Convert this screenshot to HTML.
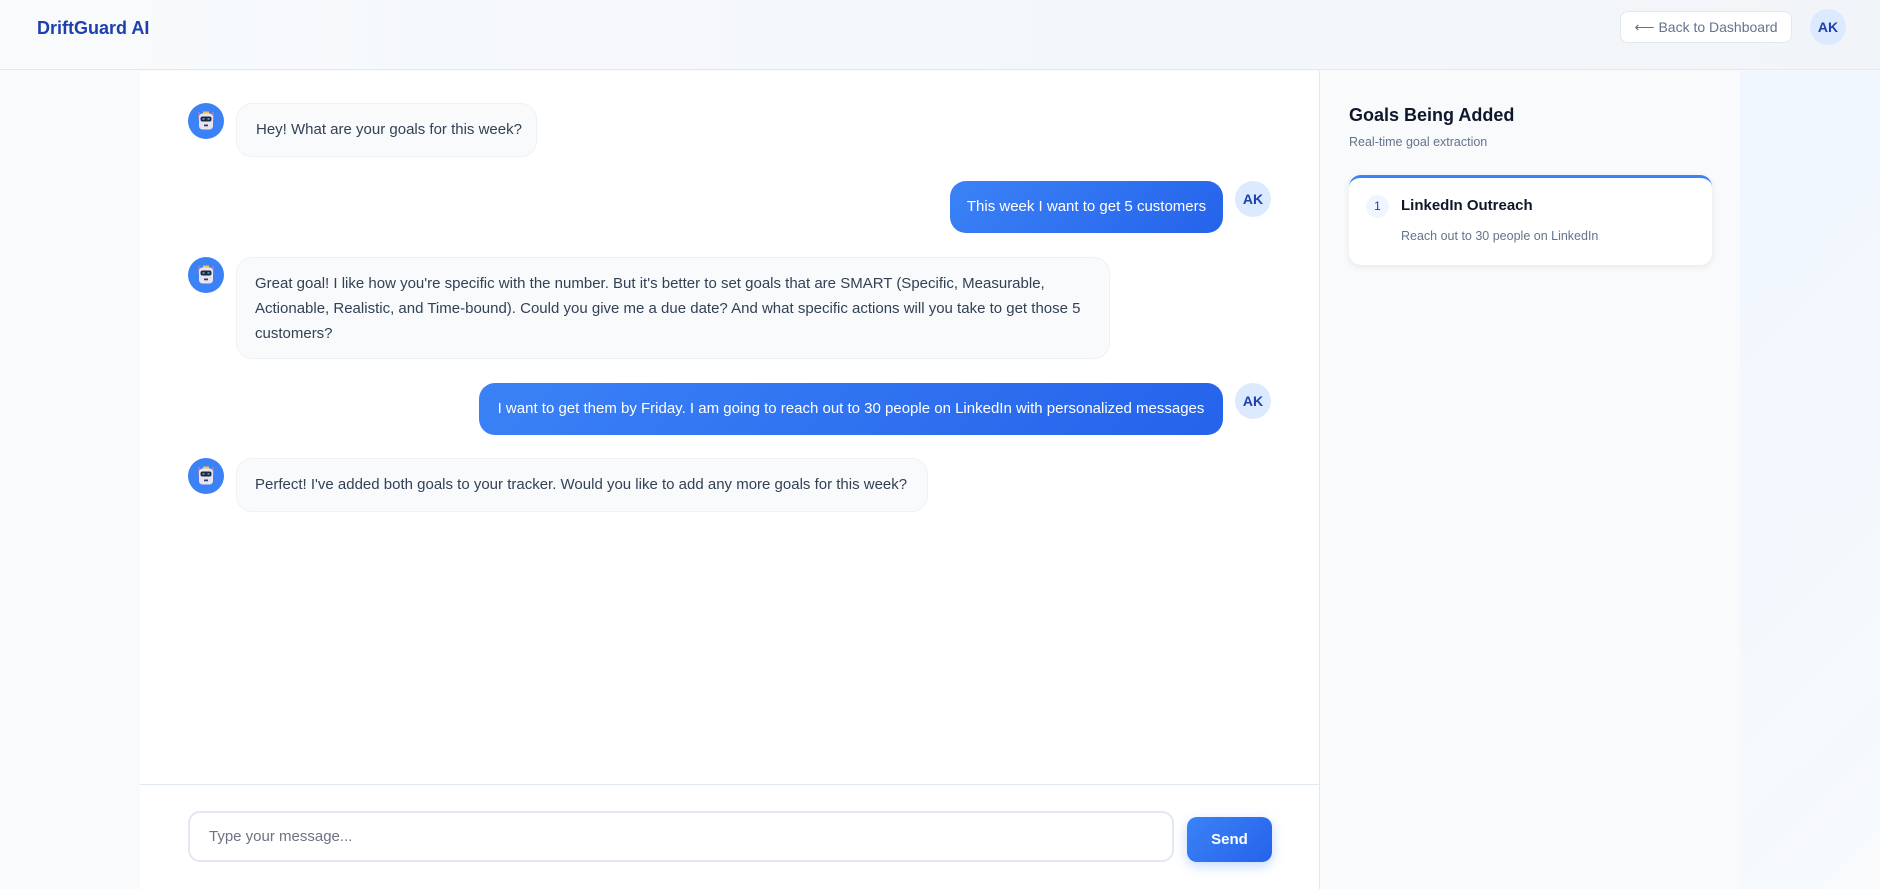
<!DOCTYPE html>
<html><head><meta charset="utf-8"><style>
*{box-sizing:border-box;margin:0;padding:0}
body{width:1880px;height:889px;overflow:hidden;background:#f8fafc;font-family:"Liberation Sans","Noto Sans CJK SC",sans-serif;position:relative;color:#334155}
.hdr{position:absolute;left:0;top:0;width:1880px;height:70px;background:linear-gradient(90deg,#f8fafc,#f1f5f9);border-bottom:1px solid #e2e8f0}
.logo{position:absolute;left:37px;top:18px;font-size:18px;font-weight:bold;color:#1e40af}
.back{position:absolute;left:1620px;top:11px;width:172px;height:32px;border:1px solid #e2e8f0;border-radius:8px;background:#fff;font-size:14px;color:#64748b;text-align:center;line-height:30px;white-space:nowrap}
.av{position:absolute;width:36px;height:36px;border-radius:50%;background:#dbeafe;color:#1e40af;font-weight:bold;font-size:14px;text-align:center;line-height:36px}
.chat{position:absolute;left:140px;top:71px;width:1180px;height:818px;background:#fff;border-right:1px solid #e2e8f0}
.right{position:absolute;left:1740px;top:71px;width:140px;height:818px;background:linear-gradient(135deg,#eff6ff,#f8fafc)}
.bot{position:absolute;left:188px;width:36px;height:36px}
.b{position:absolute;left:236px;background:#f8fafc;border:1px solid #eef2f7;border-radius:16px;font-size:15px;line-height:25px;padding:13px 18px;color:#334155;white-space:nowrap}
.u{position:absolute;right:657px;background:linear-gradient(135deg,#3b82f6,#2563eb);color:#fff;border-radius:16px;font-size:15px;height:52px;line-height:52px;white-space:nowrap;text-align:center}
.div{position:absolute;left:140px;top:784px;width:1180px;height:1px;background:#e2e8f0}
.inp{position:absolute;left:188px;top:811px;width:986px;height:51px;border:2px solid #e2e8f0;border-radius:12px;background:#fff;font-size:15px;color:#6b7280;padding-left:19px;line-height:47px}
.send{position:absolute;left:1187px;top:817px;width:85px;height:45px;border-radius:10px;background:linear-gradient(135deg,#3b82f6,#2563eb);color:#fff;font-weight:bold;font-size:15px;text-align:center;line-height:45px;box-shadow:0 4px 12px rgba(59,130,246,.3)}
</style></head><body>
<div class="hdr"><div class="logo">DriftGuard AI</div>
<div class="back">⟵ Back to Dashboard</div>
<div class="av" style="left:1810px;top:9px">AK</div></div>
<div class="chat"></div>
<div class="right"></div>

<svg width="0" height="0" style="position:absolute"><defs><symbol id="r" viewBox="0 0 36 36"><circle cx="18" cy="18" r="18" fill="#3b82f6"/><rect x="10.5" y="9" width="1" height="8" fill="#e879a0"/><rect x="24.5" y="9" width="1" height="8" fill="#e879a0"/><rect x="15" y="8.5" width="6" height="2" fill="#f5c542"/><rect x="11" y="10.5" width="14" height="16" rx="3.5" fill="#e9e3f2"/><rect x="12.5" y="13.5" width="11" height="5" rx="2" fill="#1e293b"/><rect x="14.5" y="15.2" width="2" height="1.5" fill="#38bdf8"/><rect x="19.5" y="15.2" width="2" height="1.5" fill="#38bdf8"/><rect x="16" y="21.5" width="4" height="1.8" fill="#334155"/></symbol></defs></svg>

<svg class="bot" style="top:103px"><use href="#r"/></svg>
<div class="b" style="top:103px;height:54px;width:301px;padding-left:19px">Hey! What are your goals for this week?</div>

<div class="u" style="top:181px;width:273px">This week I want to get 5 customers</div>
<div class="av" style="left:1235px;top:181px">AK</div>

<svg class="bot" style="top:257px"><use href="#r"/></svg>
<div class="b" style="top:257px;height:102px;width:874px">Great goal! I like how you're specific with the number. But it's better to set goals that are SMART (Specific, Measurable,<br>Actionable, Realistic, and Time-bound). Could you give me a due date? And what specific actions will you take to get those 5<br>customers?</div>

<div class="u" style="top:383px;width:744px">I want to get them by Friday. I am going to reach out to 30 people on LinkedIn with personalized messages</div>
<div class="av" style="left:1235px;top:383px">AK</div>

<svg class="bot" style="top:458px"><use href="#r"/></svg>
<div class="b" style="top:458px;height:54px;width:692px">Perfect! I've added both goals to your tracker. Would you like to add any more goals for this week?</div>

<div class="div"></div>
<div class="inp">Type your message...</div>
<div class="send">Send</div>

<div style="position:absolute;left:1349px;top:105px;font-size:18px;font-weight:bold;color:#0f172a">Goals Being Added</div>
<div style="position:absolute;left:1349px;top:135px;font-size:12.5px;color:#64748b">Real-time goal extraction</div>
<div style="position:absolute;left:1349px;top:175px;width:363px;height:90px;background:#fff;border-radius:12px;border-top:3px solid #3b82f6;box-shadow:0 2px 8px rgba(0,0,0,.08)">
<div style="position:absolute;left:17px;top:17px;width:23px;height:23px;border-radius:50%;background:#eff6ff;color:#1e40af;font-size:12px;text-align:center;line-height:23px">1</div>
<div style="position:absolute;left:52px;top:19px;font-size:15px;font-weight:bold;color:#0f172a">LinkedIn Outreach</div>
<div style="position:absolute;left:52px;top:51px;font-size:12.5px;color:#64748b">Reach out to 30 people on LinkedIn</div>
</div>
</body></html>
